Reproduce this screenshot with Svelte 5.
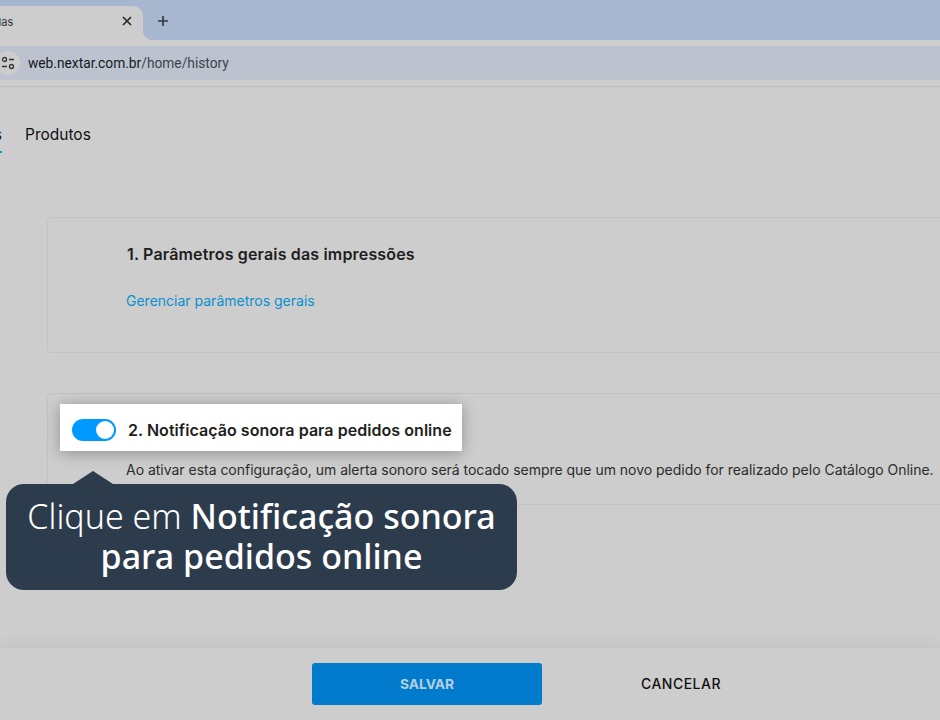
<script>
  const cards = [
    { title: "1. Parâmetros gerais das impressões", link: "Gerenciar parâmetros gerais" },
    { title: "2. Notificação sonora para pedidos online", text: "Ao ativar esta configuração, um alerta sonoro será tocado sempre que um novo pedido for realizado pelo Catálogo Online." }
  ];
</script>

<div class="page">
  <div class="tabstrip">
    <div class="tab">
      <span class="tab-title">das</span>
      <svg class="close" width="12" height="12" viewBox="0 0 12 12"><path d="M2 2l8 8M10 2l-8 8" /></svg>
    </div>
    <svg class="plus" width="12" height="12" viewBox="0 0 12 12"><path d="M6 1v10M1 6h10" /></svg>
  </div>

  <div class="toolbar">
    <div class="address">
      <span class="site-icon">
        <svg width="14" height="14" viewBox="0 0 14 14">
          <circle cx="3.5" cy="3.5" r="2" />
          <path d="M8 3.5h5M1 10.5h5" />
          <circle cx="10.5" cy="10.5" r="2" />
        </svg>
      </span>
      <span class="url"><b>web.nextar.com.br</b>/home/history</span>
    </div>
  </div>

  <nav class="tabs">
    <span class="tab-prev">s</span>
    <span class="tab-link">Produtos</span>
  </nav>

  <main class="content">
    {#each cards as card}
      <section class="card" class:short={card.text}>
        <h3>{card.title}</h3>
        {#if card.link}
          <a href="#top">{card.link}</a>
        {:else}
          <p>{card.text}</p>
        {/if}
      </section>
    {/each}
  </main>

  <footer class="footer">
    <button class="save">SALVAR</button>
    <button class="cancel">CANCELAR</button>
  </footer>

  <!-- tour overlay -->
  <div class="spot">
    <span class="toggle"><span class="knob"></span></span>
    <span class="spot-label">2. Notificação sonora para pedidos online</span>
  </div>
  <div class="tip">
    <span class="arrow"></span>
    Clique em <strong>Notificação sonora</strong><br /><strong>para pedidos online</strong>
  </div>
</div>

<style>
  :global(body) {
    margin: 0;
    background: #cdcdcd;
  }

  .page {
    position: relative;
    width: 940px;
    height: 720px;
    overflow: hidden;
    display: flex;
    flex-direction: column;
    background: #cdcdcd;
    font-family: Inter, "Liberation Sans", sans-serif;
    color: #1f1f1f;
  }

  .tabstrip {
    height: 40px;
    flex: none;
    display: flex;
    align-items: flex-end;
    background: #a6b7cf;
  }

  .tab {
    position: relative;
    width: 143px;
    height: 34px;
    box-sizing: border-box;
    padding: 0 10px 3px 0;
    display: flex;
    align-items: center;
    justify-content: space-between;
    background: #cdcdcd;
    border-top-right-radius: 10px;
  }

  .tab::after {
    content: "";
    position: absolute;
    left: 100%;
    bottom: 0;
    width: 10px;
    height: 10px;
    background: radial-gradient(circle at 100% 0, transparent 10px, #cdcdcd 10.5px);
  }

  .tab-title {
    font-size: 11px;
    color: #333;
    margin-left: -5.5px;
  }

  .close,
  .plus {
    fill: none;
    stroke-width: 1.7;
  }

  .close {
    stroke: #2a2a2a;
    margin-top: -2px;
  }

  .plus {
    stroke: #333a44;
    margin: 0 0 13px 14px;
  }

  .toolbar {
    height: 47px;
    flex: none;
    box-sizing: border-box;
    padding-top: 6px;
    border-bottom: 1px solid #bababa;
  }

  .address {
    height: 34px;
    display: flex;
    align-items: center;
    background: #bcc3ce;
    font-size: 13px;
  }

  .site-icon {
    width: 24px;
    height: 24px;
    margin-left: -4px;
    border-radius: 50%;
    background: #cdcdcd;
    display: flex;
    align-items: center;
    justify-content: center;
    flex: none;
  }

  .site-icon svg {
    fill: none;
    stroke: #333;
    stroke-width: 1.3;
  }

  .url {
    margin-left: 8px;
    font-family: Roboto, sans-serif;
    font-size: 13.75px;
    color: #3c4350;
  }

  .url b {
    font-weight: 400;
    color: #14181f;
  }

  .tabs {
    height: 64px;
    flex: none;
    box-sizing: border-box;
    padding-top: 38px;
    display: flex;
    align-items: flex-start;
    font-size: 15.5px;
    line-height: 20px;
    color: #111;
  }

  .tab-prev {
    width: 2px;
    overflow: hidden;
    direction: rtl;
    padding-bottom: 6px;
    border-bottom: 2px solid #0a8fd0;
  }

  .tab-link {
    margin-left: 23px;
  }

  .content {
    flex: 1;
    padding: 66px 0 0 47px;
    display: flex;
    flex-direction: column;
    gap: 40px;
  }

  .card {
    width: 1000px;
    height: 136px;
    box-sizing: border-box;
    padding: 26px 0 0 78px;
    border: 1px solid #c3c3c3;
    border-radius: 4px;
  }

  .card.short {
    height: 112px;
    padding-top: 25px;
  }

  h3 {
    margin: 0 0 26px 1px;
    font-size: 16px;
    line-height: 20px;
    font-weight: 600;
    letter-spacing: 0.17px;
    color: #1e1e1e;
  }

  a {
    font-size: 14px;
    color: #0a8fd0;
    text-decoration: none;
  }

  p {
    margin: 0;
    font-size: 14px;
    line-height: 18px;
    letter-spacing: -0.02px;
    color: #2c2c2c;
  }

  .card.short h3 {
    visibility: hidden;
    margin-bottom: 22px;
  }

  .footer {
    height: 72px;
    flex: none;
    box-sizing: border-box;
    padding: 15px 0 0 312px;
    display: flex;
    align-items: flex-start;
    background: #cdcdcd;
    box-shadow: 0 -6px 12px rgba(0, 0, 0, 0.04);
  }

  button {
    border: 0;
    padding: 0;
    font-family: inherit;
    font-size: 14px;
    cursor: pointer;
  }

  .save {
    width: 230px;
    height: 42px;
    border-radius: 3px;
    background: #027bcd;
    color: #b4d0e0;
    font-size: 13.75px;
    font-weight: 700;
  }

  .cancel {
    width: 140px;
    height: 40px;
    margin-left: 69px;
    background: none;
    color: #111;
    font-weight: 500;
    letter-spacing: 0.5px;
  }

  .spot {
    position: absolute;
    left: 60px;
    top: 404px;
    width: 402px;
    height: 47px;
    box-sizing: border-box;
    padding: 4px 0 0 12px;
    display: flex;
    align-items: center;
    gap: 12px;
    background: #fff;
    box-shadow: 0 2px 14px rgba(0, 0, 0, 0.3);
  }

  .toggle {
    position: relative;
    width: 44px;
    height: 22px;
    border-radius: 11px;
    background: #0099ff;
    flex: none;
  }

  .knob {
    position: absolute;
    right: 2px;
    top: 2px;
    width: 18px;
    height: 18px;
    border-radius: 50%;
    background: #fff;
  }

  .spot-label {
    font-size: 16px;
    font-weight: 600;
    letter-spacing: 0.05px;
    color: #1e1e1e;
    white-space: nowrap;
  }

  .tip {
    position: absolute;
    left: 6px;
    top: 484px;
    width: 511px;
    height: 106px;
    border-radius: 18px;
    background: #2d3c4d;
    color: #fff;
    text-align: center;
    font-family: "Noto Sans", sans-serif;
    font-size: 34px;
    font-weight: 300;
    line-height: 40px;
    padding-top: 12px;
    box-sizing: border-box;
  }

  .tip strong {
    font-weight: 500;
  }

  .arrow {
    position: absolute;
    left: 67px;
    top: -13px;
    width: 0;
    height: 0;
    border-left: 20px solid transparent;
    border-right: 20px solid transparent;
    border-bottom: 13px solid #2d3c4d;
  }
</style>
